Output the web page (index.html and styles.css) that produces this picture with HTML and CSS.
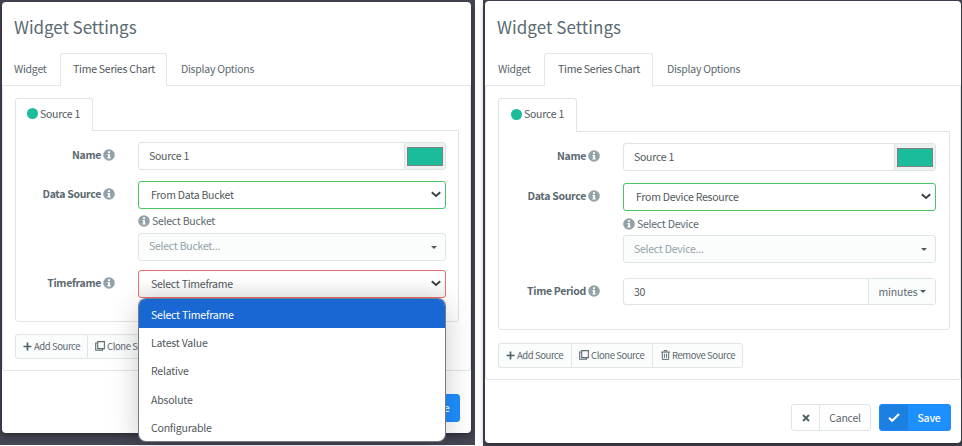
FILE: index.html
```html
<!DOCTYPE html>
<html lang="en">
<head>
<meta charset="utf-8">
<title>Widget Settings</title>
<link rel="stylesheet" href="styles.css">
</head>
<body>
<svg width="0" height="0" class="defs">
  <symbol id="info" viewBox="0 0 12 12"><circle cx="6" cy="6" r="5.8" fill="#93a1a8"/><path d="M5 2.3h2v1.6H5zM4.4 4.9H7v3.4h.7v1.2H4.4V8.3h.7V6.1h-.7z" fill="#fff"/></symbol>
  <symbol id="chev" viewBox="0 0 10 7"><path d="M.8 1.3L5 5l4.200-3.700" fill="none" stroke="#3c4146" stroke-width="2"/></symbol>
  <symbol id="plus" viewBox="0 0 9 9"><path d="M4.5 .5v8M.5 4.5h8" stroke="#4f5f66" stroke-width="1.7"/></symbol>
  <symbol id="clone" viewBox="0 0 10 10"><path d="M2.7.6h6.7v7H2.7zM2.5 2H.7v7.300h6.800V8" fill="none" stroke="#5d6b72" stroke-width="1.1"/></symbol>
  <symbol id="trash" viewBox="0 0 9 10"><path d="M0 2.1h9M3 2V.6h3V2M1.3 2.2v7.200h6.400V2.2M3.4 3.8v4M5.600 3.8v4" fill="none" stroke="#5d6b72" stroke-width="1"/></symbol>
  <symbol id="cross" viewBox="0 0 8 8"><path d="M1 1l6 6M7 1L1 7" stroke="#4f5f66" stroke-width="1.9"/></symbol>
  <symbol id="check" viewBox="0 0 12 9"><path d="M1 4.8l3.2 3L11 1" fill="none" stroke="#fff" stroke-width="2.1"/></symbol>
</svg>
<main class="stage">
  <section class="backdrop bucket">
    <div class="modal">
      <h1>Widget Settings</h1>
      <nav class="tabs"><span class="tab first">Widget</span><span class="tab active">Time Series Chart</span><span class="tab last">Display Options</span></nav>
      <div class="pane">
        <div class="source-tab"><i class="dot"></i>Source 1</div>
        <div class="source-pane">
          <div class="row name"><label>Name<svg class="info"><use href="#info"/></svg></label><div class="control input"><span>Source 1</span><div class="addon"><i class="swatch"></i></div></div></div>
          <div class="row source"><label>Data Source<svg class="info"><use href="#info"/></svg></label><div class="control select valid"><span>From Data Bucket</span><svg class="chev"><use href="#chev"/></svg></div></div>
          <div class="hint"><svg class="info"><use href="#info"/></svg>Select Bucket</div>
          <div class="row pick"><div class="control picker"><span>Select Bucket...</span><i class="caret"></i></div></div>
          <div class="row time"><label>Timeframe<svg class="info"><use href="#info"/></svg></label><div class="control select invalid"><span>Select Timeframe</span><svg class="chev"><use href="#chev"/></svg>
            <ul class="menu"><li class="on">Select Timeframe</li><li>Latest Value</li><li>Relative</li><li>Absolute</li><li>Configurable</li></ul>
          </div></div>
        </div>
        <div class="actions"><span class="act add"><svg class="plus"><use href="#plus"/></svg>Add Source</span><span class="act clone"><svg class="cloneicon"><use href="#clone"/></svg>Clone Source</span></div>
      </div>
      <footer><div class="btn save"><b><svg class="check"><use href="#check"/></svg></b><span>Save</span></div></footer>
    </div>
  </section>
  <section class="backdrop device">
    <div class="modal">
      <h1>Widget Settings</h1>
      <nav class="tabs"><span class="tab first">Widget</span><span class="tab active">Time Series Chart</span><span class="tab last">Display Options</span></nav>
      <div class="pane">
        <div class="source-tab"><i class="dot"></i>Source 1</div>
        <div class="source-pane">
          <div class="row name"><label>Name<svg class="info"><use href="#info"/></svg></label><div class="control input"><span>Source 1</span><div class="addon"><i class="swatch"></i></div></div></div>
          <div class="row source"><label>Data Source<svg class="info"><use href="#info"/></svg></label><div class="control select valid"><span>From Device Resource</span><svg class="chev"><use href="#chev"/></svg></div></div>
          <div class="hint"><svg class="info"><use href="#info"/></svg>Select Device</div>
          <div class="row pick"><div class="control picker"><span>Select Device...</span><i class="caret"></i></div></div>
          <div class="row time"><label>Time Period<svg class="info"><use href="#info"/></svg></label><div class="control input"><span>30</span><div class="unit">minutes<i class="caret"></i></div></div></div>
        </div>
        <div class="actions"><span class="act add"><svg class="plus"><use href="#plus"/></svg>Add Source</span><span class="act clone"><svg class="cloneicon"><use href="#clone"/></svg>Clone Source</span><span class="act remove"><svg class="trash"><use href="#trash"/></svg>Remove Source</span></div>
      </div>
      <footer><div class="btn cancel"><b><svg class="cross"><use href="#cross"/></svg></b><span>Cancel</span></div><div class="btn save"><b><svg class="check"><use href="#check"/></svg></b><span>Save</span></div></footer>
    </div>
  </section>
</main>
</body>
</html>
```
FILE: styles.css
```css
* { box-sizing: border-box; }
body { margin: 0; background: #fff; font: 10.5px/14px "Noto Sans CJK SC", "Open Sans", sans-serif; letter-spacing: -.25px; color: #5b686f; overflow: hidden; }
.defs { position: absolute; }
svg { display: block; flex: none; }
.stage { display: flex; gap: 8px; width: 962px; height: 446px; }
.backdrop { background: #454654; }
.bucket { width: 475px; height: 445px; padding: 2px 0 0 2px; }
.device { width: 479px; height: 446px; padding: 1px 0 0 2px; }
.modal { background: #fff; border-radius: 4px; display: flex; flex-direction: column; box-shadow: 0 2px 6px rgba(0,0,0,.45); }
.bucket .modal { width: 469px; height: 431px; }
.device .modal { width: 476px; height: 442px; }
h1 { margin: 0; font-size: 17px; line-height: 26px; font-weight: 400; letter-spacing: -.05px; padding: 12px 0 0 12px; height: 51px; color: #5b6a72; white-space: nowrap; }
.device h1 { height: 52px; padding-top: 13px; letter-spacing: .05px; }
.tabs { display: flex; height: 33px; line-height: 31px; white-space: nowrap; border-bottom: 1px solid #e0e7e7; }
.device .tabs { height: 33px; }
.tab { height: 33px; }
.tab.first { width: 58px; padding-left: 12px; }
.tab.active { width: 107px; padding-left: 12px; border: 1px solid #e0e7e7; border-bottom: 0; border-radius: 3px 3px 0 0; background: #fff; color: #50585c; line-height: 29px; }
.tab.last { padding-left: 14px; }
.device .tab.first { width: 59px; padding-left: 13px; }
.device .tab.active { width: 109px; padding-left: 13px; }
.pane { border: 1px solid #e0e7e7; border-top: 0; border-radius: 0 0 3px 3px; padding: 12px 12px 0; height: 285px; }
.device .pane { height: 294px; }
.source-tab { position: relative; display: flex; align-items: center; width: 78px; height: 33px; margin-bottom: -1px; padding: 0 0 3px 11px; gap: 2px; border: 1px solid #dfe5e5; border-bottom: 0; border-radius: 3px 3px 0 0; background: #fff; color: #50585c; white-space: nowrap; }
.device .source-tab { width: 79px; height: 34px; padding-left: 12px; }
.dot { width: 11px; height: 11px; border-radius: 50%; background: #1abc9c; }
.source-pane { border: 1px solid #dfe5e5; border-radius: 0 0 3px 3px; width: 444px; height: 192px; padding: 11px 12px 0 0; }
.device .source-pane { width: 452px; height: 199px; padding: 11px 13px 0 0; }
.row { display: flex; justify-content: flex-end; }
.row label { width: 99px; margin-right: 23px; height: 26px; display: flex; align-items: center; justify-content: flex-end; gap: 2px; font-weight: 700; letter-spacing: -.3px; white-space: nowrap; }
.info { width: 12px; height: 12px; }
.control { flex: none; width: 308px; height: 28px; border: 1px solid #dce4e6; border-radius: 3px; display: flex; align-items: stretch; justify-content: space-between; line-height: 25px; color: #50585c; white-space: nowrap; background: #fff; }
.device .control { width: 313px; }
.input { padding-left: 10px; }
.addon { width: 41px; background: #eef1f1; border-left: 1px solid #dce4e6; padding: 4px 2px 3px; }
.swatch { display: block; width: 36px; height: 19px; background: #1abc9c; border: 1px solid #80807f; }
.select, .picker { align-items: center; padding: 0 4px 0 13px; }
.select { padding-left: 12px; }
.select > span { padding-bottom: 1px; }
.valid { border-color: #4cc564; }
.invalid { border-color: #ec6d72; position: relative; background: linear-gradient(#fff 35%, #f3f3f3); }
.chev { width: 10px; height: 7px; margin-bottom: 2px; }
.picker { padding: 0 8px 0 10px; background: #fbfdfd; color: #93a1a8; }
.picker span { padding-bottom: 3px; }
.device .picker span { padding-bottom: 1px; }
.caret { width: 0; height: 0; border: 3px solid transparent; border-top-color: #50585c; border-bottom: 0; }
.source { margin-top: 11px; }
.device .source { margin-top: 12px; }
.hint { display: flex; align-items: center; gap: 2px; height: 24px; padding-left: 122px; white-space: nowrap; }
.device .hint { padding: 1px 0 0 124px; }
.time { margin-top: 9px; }
.device .time { margin-top: 15px; }
.device .time .control { height: 27px; }
.unit { display: flex; align-items: center; justify-content: center; gap: 2px; width: 67px; border-left: 1px solid #dce4e6; background: #fbfdfd; color: #5b686f; letter-spacing: -.1px; }
.menu { position: absolute; z-index: 3; left: 0; top: 28px; width: 306px; height: 142px; margin: 0; padding: 0; list-style: none; overflow: hidden; background: #fff; border-radius: 7px; color: #50585c; box-shadow: 0 0 0 1px #777b80, 0 5px 30px rgba(0,0,0,.22); }
.menu li { height: 28.3px; line-height: 30px; padding-left: 12px; letter-spacing: -.2px; }
.menu .on { height: 29px; line-height: 31px; background: #1967d2; color: #fff; }
.actions { display: flex; height: 25px; margin-top: 12px; font-size: 9.5px; letter-spacing: -.42px; }
.device .actions { margin-top: 13px; }
.act { display: flex; align-items: center; gap: 2px; height: 25px; padding: 0 0 1px 7px; border: 1px solid #dfe5e5; border-right-width: 0; background: #fbfdfd; white-space: nowrap; }
.act:first-child { border-radius: 3px 0 0 3px; }
.act:last-child { border-right-width: 1px; border-radius: 0 3px 3px 0; }
.add { width: 72px; }
.device .add { width: 73px; }
.clone { width: 81px; }
.remove { width: 91px; padding-left: 8px; }
.plus { width: 9px; height: 9px; }
.cloneicon { width: 10px; height: 10px; }
.trash { width: 9px; height: 10px; }
footer { display: flex; justify-content: flex-end; gap: 8px; padding: 23px 11px 0 0; }
.device footer { padding: 24px 10px 0 0; }
.btn { display: flex; height: 28px; line-height: 25px; border: 1px solid #dce4e6; border-radius: 3px; background: #fff; overflow: hidden; white-space: nowrap; }
.device .btn { height: 27px; }
.btn b { width: 28px; display: flex; align-items: center; justify-content: center; border-right: 1px solid #dce4e6; }
.btn span { flex: 1; text-align: center; }
.cancel { width: 80px; }
.save { width: 72px; border-color: #1e88fb; background: #1e8fff; color: #fff; }
.save span { font-weight: 500; }
.save b { background: #1c7fe2; border: 0; }
.cross { width: 8px; height: 8px; }
.check { width: 12px; height: 9px; }
```
